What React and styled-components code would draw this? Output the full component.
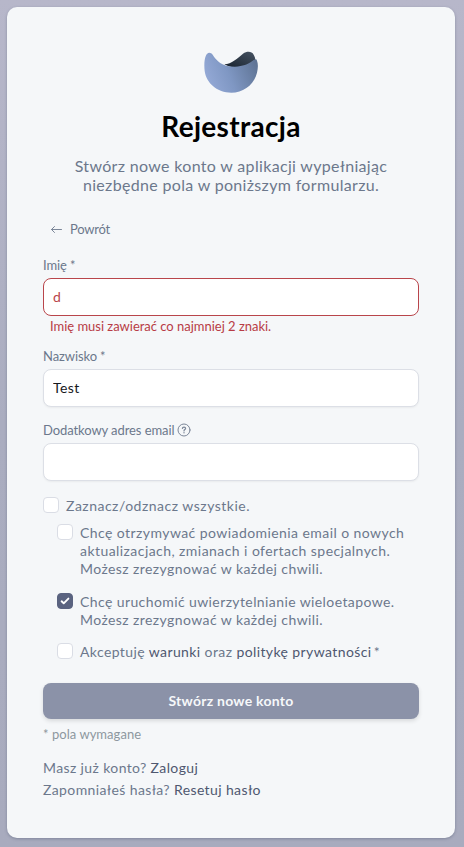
import React from 'react';
import styled, { createGlobalStyle } from 'styled-components';

const GlobalStyle = createGlobalStyle`
  *, *::before, *::after { box-sizing: border-box; }
  body {
    margin: 0;
    background: #b2b3c7;
    font-family: Lato, "Open Sans", sans-serif;
    font-weight: 400;
    color: #6c788c;
  }
`;

const Page = styled.main`
  min-height: 847px;
  padding: 7px 9px 9px 7px;
  background: linear-gradient(180deg, #b7b7ca 0%, #aaadc0 50%, #a8abbe 100%);
`;

const Card = styled.section`
  height: 831px;
  padding: 44px 36px 0;
  border-radius: 10px;
  background: #f5f7f9;
  box-shadow: 0 1px 3px rgba(70, 80, 105, 0.4);
`;

const Header = styled.header`
  display: flex;
  flex-direction: column;
  align-items: center;
  text-align: center;
`;

const Logo = styled.svg`
  display: block;
  width: 55px;
  height: 42px;
`;

const Title = styled.h1`
  margin: 15px 0 0;
  font-size: 28px;
  line-height: 36px;
  font-weight: 700;
  letter-spacing: 0.3px;
  color: #000;
`;

const Subtitle = styled.p`
  margin: 12px 0 0;
  font-size: 16px;
  line-height: 19px;
  letter-spacing: 0.33px;
`;

const BackLink = styled.a`
  display: flex;
  align-items: center;
  gap: 7px;
  height: 18px;
  margin: 26px 0 0 7px;
  font-size: 13px;
  letter-spacing: -0.23px;
  svg { display: block; }
`;

const Field = styled.div`
  margin-top: ${({ $top }) => $top}px;
`;

const Label = styled.label`
  display: flex;
  align-items: center;
  gap: 3px;
  height: 18px;
  font-size: 13px;
  letter-spacing: -0.08px;
  svg { display: block; }
`;

const Input = styled.input`
  display: block;
  width: 376px;
  height: 38px;
  margin-top: 4px;
  padding: 0 9px 2px;
  border: 1px solid ${({ $invalid }) => ($invalid ? '#b9454b' : '#dcdfe6')};
  border-radius: 8px;
  outline: none;
  background: #fff;
  box-shadow: ${({ $invalid }) => ($invalid ? 'none' : '0 1px 2px rgba(0, 0, 0, 0.05)')};
  font: 400 14px Lato, sans-serif;
  letter-spacing: 0.45px;
  color: ${({ $invalid }) => ($invalid ? '#b9454b' : '#16181d')};
`;

const ErrorText = styled.p`
  margin: 1px 0 0 7px;
  font-size: 13px;
  line-height: 18px;
  letter-spacing: -0.02px;
  color: #b83c46;
`;

const Option = styled.label`
  display: flex;
  align-items: flex-start;
  gap: 7px;
  margin: ${({ $top }) => $top}px 0 0 ${({ $indent }) => $indent || 0}px;
`;

const CheckBox = styled.span`
  display: grid;
  place-items: center;
  flex: none;
  width: 16px;
  height: 16px;
  border: 1px solid ${({ $checked }) => ($checked ? '#5a6380' : '#dadde5')};
  border-radius: 4px;
  background: ${({ $checked }) => ($checked ? '#5a6380' : '#fff')};
`;

const OptionText = styled.span`
  font-size: 14px;
  line-height: 18px;
  letter-spacing: 0.4px;
  white-space: nowrap;
`;

const Line = styled.span`
  display: block;
  letter-spacing: ${({ $spacing }) => $spacing}px;
`;

const Link = styled.a`
  color: #4f5870;
`;

const Submit = styled.button`
  display: block;
  width: 376px;
  height: 36px;
  margin-top: 22px;
  padding: 0 0 2px;
  border: 0;
  border-radius: 8px;
  background: #8b92a8;
  box-shadow: 0 2px 4px rgba(0, 0, 0, 0.12);
  font: 700 14px Lato, sans-serif;
  letter-spacing: 0.25px;
  color: #f6f8fa;
`;

const Note = styled.p`
  margin: 6px 0 0;
  font-size: 13px;
  line-height: 18px;
  letter-spacing: 0.04px;
  color: #8d979f;
`;

const Footer = styled.footer`
  margin-top: 14px;
  font-size: 14px;
  line-height: 22px;
  letter-spacing: 0.38px;
`;

const FooterRow = styled.div`
  height: 22px;
`;

function BrandLogo() {
  return (
    <Logo viewBox="41 32 165 126" aria-hidden="true">
      <defs>
        <linearGradient id="bowl" x1="0" y1="0.65" x2="1" y2="0.35">
          <stop offset="0" stopColor="#95aad7" />
          <stop offset="0.45" stopColor="#7f97c3" />
          <stop offset="1" stopColor="#5f7495" />
        </linearGradient>
        <linearGradient id="shade" x1="0" y1="1" x2="1" y2="0">
          <stop offset="0" stopColor="#18222e" />
          <stop offset="1" stopColor="#465363" />
        </linearGradient>
      </defs>
      <path
        fill="url(#shade)"
        d="M102 72C124 70 142 54 158 40C170 32 184 32 190 43C194 50 196 56 194 62C180 70 160 82 132 81C122 80 112 78 102 72Z"
      />
      <path
        fill="url(#bowl)"
        d="M46 48C50 35 60 34 67 43C78 60 94 79 134 79C158 78 172 72 186 62C193 56 198 54 200 61C204 72 203 84 200 97C192 132 160 157 123 157C80 157 48 128 43 92C41 75 42 58 46 48Z"
      />
    </Logo>
  );
}

function ArrowIcon() {
  return (
    <svg width="13" height="11" viewBox="0 0 13 11" fill="none" stroke="#7c8799" strokeLinecap="round" strokeLinejoin="round" aria-hidden="true">
      <path d="M11.5 5.5H1.5M4.5 2.5L1.5 5.5L4.5 8.5" />
    </svg>
  );
}

function HelpIcon() {
  return (
    <svg width="14" height="14" viewBox="0 0 14 14" fill="none" stroke="#7c8799" strokeLinecap="round" aria-hidden="true">
      <circle cx="7" cy="7" r="6" />
      <path strokeWidth="1.2" d="M5.4 5.4C5.5 3.6 8.6 3.7 8.6 5.4C8.6 6.6 7 6.5 7 7.9" />
      <circle cx="7" cy="9.8" r="0.7" fill="#7c8799" stroke="none" />
    </svg>
  );
}

function CheckIcon() {
  return (
    <svg width="14" height="14" viewBox="0 0 14 14" fill="none" stroke="#fff" strokeWidth="1.9" strokeLinecap="round" strokeLinejoin="round" aria-hidden="true">
      <path d="M3.6 7.3L5.7 9.3L10.4 4.6" />
    </svg>
  );
}

export default function App() {
  return (
    <>
      <GlobalStyle />
      <Page>
        <Card>
          <Header>
            <BrandLogo />
            <Title>Rejestracja</Title>
            <Subtitle>
              Stwórz nowe konto w aplikacji wypełniając
              <br />
              niezbędne pola w poniższym formularzu.
            </Subtitle>
          </Header>
          <BackLink>
            <ArrowIcon />
            Powrót
          </BackLink>
          <Field $top={18}>
            <Label htmlFor="first">Imię <span>*</span></Label>
            <Input id="first" $invalid defaultValue="d" />
            <ErrorText>Imię musi zawierać co najmniej 2 znaki.</ErrorText>
          </Field>
          <Field $top={12}>
            <Label htmlFor="last">Nazwisko <span>*</span></Label>
            <Input id="last" defaultValue="Test" />
          </Field>
          <Field $top={14}>
            <Label htmlFor="mail">Dodatkowy adres email <HelpIcon /></Label>
            <Input id="mail" />
          </Field>
          <Option $top={16}>
            <CheckBox />
            <OptionText><Line $spacing={0.5}>Zaznacz/odznacz wszystkie.</Line></OptionText>
          </Option>
          <Option $top={9} $indent={14}>
            <CheckBox />
            <OptionText>
              <Line $spacing={0.43}>Chcę otrzymywać powiadomienia email o nowych</Line>
              <Line $spacing={0.44}>aktualizacjach, zmianach i ofertach specjalnych.</Line>
              <Line $spacing={0.42}>Możesz zrezygnować w każdej chwili.</Line>
            </OptionText>
          </Option>
          <Option $top={15} $indent={14}>
            <CheckBox $checked><CheckIcon /></CheckBox>
            <OptionText>
              <Line $spacing={0.4}>Chcę uruchomić uwierzytelnianie wieloetapowe.</Line>
              <Line $spacing={0.42}>Możesz zrezygnować w każdej chwili.</Line>
            </OptionText>
          </Option>
          <Option $top={14} $indent={14}>
            <CheckBox />
            <OptionText>
              Akceptuję <Link>warunki</Link> oraz <Link>politykę prywatności</Link>&#8201;*
            </OptionText>
          </Option>
          <Submit type="button">Stwórz nowe konto</Submit>
          <Note>* pola wymagane</Note>
          <Footer>
            <FooterRow>Masz już konto? <Link>Zaloguj</Link></FooterRow>
            <FooterRow>Zapomniałeś hasła? <Link>Resetuj hasło</Link></FooterRow>
          </Footer>
        </Card>
      </Page>
    </>
  );
}
